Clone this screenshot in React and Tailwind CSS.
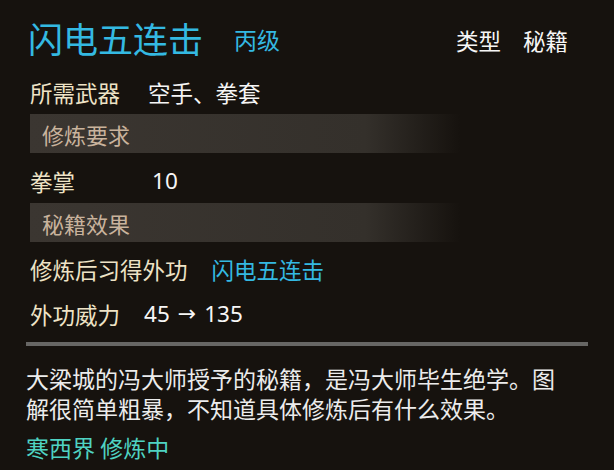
const font = { fontFamily: '"Noto Sans CJK SC", "Noto Sans", sans-serif' };

function SectionBar({ children }) {
  return (
    <div className="mt-[2px] ml-[30px] flex h-[39px] w-[430px] items-center bg-[linear-gradient(to_right,#3b3631_0%,#34302b_78%,#16120e_100%)] pl-[12px] text-[22px] text-[#c9b39d]">
      {children}
    </div>
  );
}

function Row({ label, children, className = '' }) {
  return (
    <div className={`ml-[30px] flex h-[40px] items-center text-[22.5px] ${className}`}>
      <span className="text-[#eee3c6]">{label}</span>
      {children}
    </div>
  );
}

export default function App() {
  return (
    <div className="h-[470px] w-[614px] overflow-hidden bg-[#16120e] leading-none" style={font}>
      {/* Header */}
      <div className="flex h-[50px] items-center pt-[12px] box-content">
        <span className="ml-[28px] text-[35px] text-[#34b9e2]">闪电五连击</span>
        <span className="ml-[31px] mt-[4px] text-[23px] text-[#34b9e2]">丙级</span>
        <div className="ml-auto mr-[46px] mt-[6px] flex gap-[22px] text-[22.5px] text-[#f6f6f6]">
          <span>类型</span>
          <span>秘籍</span>
        </div>
      </div>

      <Row label="所需武器" className="mt-[10px]">
        <span className="ml-[28px] text-[#f6f6f6]">空手、拳套</span>
      </Row>

      <SectionBar>修炼要求</SectionBar>

      <Row label="拳掌" className="mt-[8px]">
        <span className="ml-[77px] text-[#f6f6f6]" style={{ fontFamily: '"Noto Sans", sans-serif' }}>10</span>
      </Row>

      <SectionBar>秘籍效果</SectionBar>

      <Row label="修炼后习得外功" className="mt-[7px]">
        <span className="ml-[24px] text-[#34b9e2]">闪电五连击</span>
      </Row>

      <Row label="外功威力" className="mt-[5px]">
        <span className="ml-[24px] flex items-center gap-[8px] text-[#f6f6f6]" style={{ fontFamily: '"Noto Sans", sans-serif' }}>
          <span>45</span>
          <span className="text-[22px]" style={{ fontFamily: '"DejaVu Sans", sans-serif' }}>→</span>
          <span>135</span>
        </span>
      </Row>

      {/* Divider */}
      <div className="ml-[26px] mt-[8px] h-[4px] w-[562px] bg-[#676664]" />

      {/* Description */}
      <p className="ml-[26px] mt-[17px] w-[545px] text-[23px] leading-[30px] text-[#ececec]">
        大梁城的冯大师授予的秘籍，是冯大师毕生绝学。图解很简单粗暴，不知道具体修炼后有什么效果。
      </p>
      <div className="ml-[26px] mt-[9px] text-[23px] leading-[30px] text-[#4fd3c2]">寒西界 修炼中</div>
    </div>
  );
}
